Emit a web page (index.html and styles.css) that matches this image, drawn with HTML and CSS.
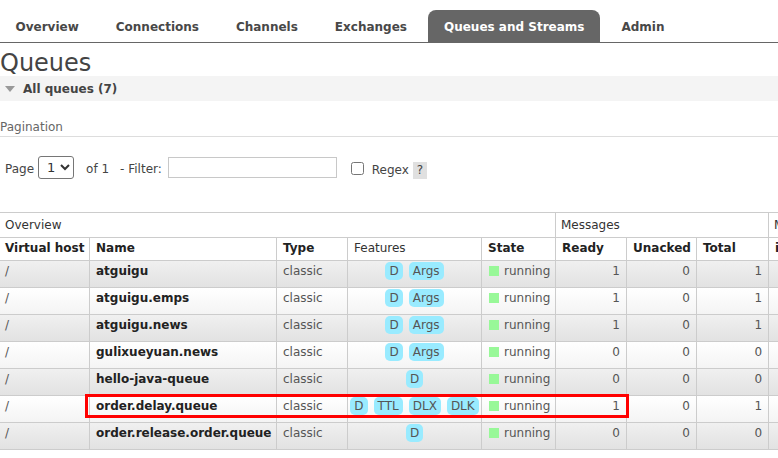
FILE: index.html
```html
<!DOCTYPE html>
<html>
<head>
<meta charset="utf-8">
<title>Queues</title>
<link rel="stylesheet" href="styles.css">
</head>
<body>
<ul class="tabs">
  <li class="tab">Overview</li>
  <li class="tab">Connections</li>
  <li class="tab">Channels</li>
  <li class="tab">Exchanges</li>
  <li class="tab active">Queues and Streams</li>
  <li class="tab">Admin</li>
</ul>
<h1 class="title">Queues</h1>
<div class="section-head"><span class="tri"></span>All queues (7)</div>
<h3 class="sub">Pagination</h3>
<div class="pager">
  <span class="lbl">Page</span>
  <select class="sel"><option>1</option></select>
  <span class="lbl of">of 1</span>
  <span class="lbl filt">- Filter:</span>
  <input class="filter" type="text">
  <input class="chk" type="checkbox">
  <span class="lbl regex">Regex</span>
  <span class="help">?</span>
</div>
<div class="table-wrap">
<table class="list">
  <colgroup>
    <col class="c-vh"><col class="c-name"><col class="c-type"><col class="c-feat"><col class="c-state"><col class="c-ready"><col class="c-unack"><col class="c-total"><col class="c-rate">
  </colgroup>
  <thead>
    <tr class="group">
      <th colspan="5" class="first">Overview</th>
      <th colspan="3">Messages</th>
      <th>Message rates</th>
    </tr>
    <tr class="head">
      <th class="first">Virtual host</th>
      <th>Name</th>
      <th>Type</th>
      <th class="normal">Features</th>
      <th>State</th>
      <th>Ready</th>
      <th>Unacked</th>
      <th>Total</th>
      <th>incoming</th>
    </tr>
  </thead>
  <tbody>
    <tr class="alt1">
      <td class="first">/</td><td class="name">atguigu</td><td>classic</td>
      <td><div class="feats"><span class="pill">D</span><span class="pill">Args</span></div></td>
      <td><span class="dot"></span>running</td><td class="num">1</td><td class="num">0</td><td class="num">1</td><td></td>
    </tr>
    <tr class="alt2">
      <td class="first">/</td><td class="name">atguigu.emps</td><td>classic</td>
      <td><div class="feats"><span class="pill">D</span><span class="pill">Args</span></div></td>
      <td><span class="dot"></span>running</td><td class="num">1</td><td class="num">0</td><td class="num">1</td><td></td>
    </tr>
    <tr class="alt1">
      <td class="first">/</td><td class="name">atguigu.news</td><td>classic</td>
      <td><div class="feats"><span class="pill">D</span><span class="pill">Args</span></div></td>
      <td><span class="dot"></span>running</td><td class="num">1</td><td class="num">0</td><td class="num">1</td><td></td>
    </tr>
    <tr class="alt2">
      <td class="first">/</td><td class="name">gulixueyuan.news</td><td>classic</td>
      <td><div class="feats"><span class="pill">D</span><span class="pill">Args</span></div></td>
      <td><span class="dot"></span>running</td><td class="num">0</td><td class="num">0</td><td class="num">0</td><td></td>
    </tr>
    <tr class="alt1">
      <td class="first">/</td><td class="name">hello-java-queue</td><td>classic</td>
      <td><div class="feats"><span class="pill">D</span></div></td>
      <td><span class="dot"></span>running</td><td class="num">0</td><td class="num">0</td><td class="num">0</td><td></td>
    </tr>
    <tr class="alt2">
      <td class="first">/</td><td class="name">order.delay.queue</td><td>classic</td>
      <td><div class="feats"><span class="pill">D</span><span class="pill">TTL</span><span class="pill">DLX</span><span class="pill">DLK</span></div></td>
      <td><span class="dot"></span>running</td><td class="num">1</td><td class="num">0</td><td class="num">1</td><td></td>
    </tr>
    <tr class="alt1">
      <td class="first">/</td><td class="name">order.release.order.queue</td><td>classic</td>
      <td><div class="feats"><span class="pill">D</span></div></td>
      <td><span class="dot"></span>running</td><td class="num">0</td><td class="num">0</td><td class="num">0</td><td></td>
    </tr>
  </tbody>
</table>
<div class="highlight"></div>
</div>
</body>
</html>
```
FILE: styles.css
```css
html, body {
  margin: 0;
  padding: 0;
  overflow: hidden;
  background: #fff;
}
body {
  font-family: "DejaVu Sans", Verdana, sans-serif;
  font-size: 12px;
  color: #444;
}
.tabs {
  display: flex;
  list-style: none;
  margin: 0;
  padding: 10px 0 0;
  border-bottom: 1px solid #666;
}
.tab {
  height: 32px;
  line-height: 34px;
  padding: 0 15.5px;
  margin-right: 6px;
  font-weight: bold;
  color: #484848;
  border-radius: 8px 8px 0 0;
  white-space: nowrap;
}
.tab.active {
  background: #666;
  color: #fff;
}
.title {
  margin: 7px 0 0;
  font-size: 24px;
  line-height: 26px;
  font-weight: normal;
  color: #444;
}
.section-head {
  display: flex;
  align-items: center;
  height: 25px;
  background: #f4f4f4;
  padding-left: 5px;
  font-weight: bold;
  color: #444;
}
.tri {
  width: 0;
  height: 0;
  border-left: 5.5px solid transparent;
  border-right: 5.5px solid transparent;
  border-top: 6px solid #999;
  margin-right: 8px;
}
.sub {
  margin: 18px 0 0;
  padding-bottom: 1px;
  font-size: 12px;
  line-height: 16px;
  font-weight: normal;
  color: #666;
  border-bottom: 1px solid #ddd;
}
.pager {
  display: flex;
  align-items: center;
  height: 24px;
  margin-top: 18px;
  padding-left: 5px;
}
.lbl {
  line-height: 14px;
  padding-top: 3px;
  color: #444;
}
.sel {
  width: 36px;
  height: 23px;
  margin: 0 0 0 4px;
  font-family: "DejaVu Sans", Verdana, sans-serif;
  font-size: 13px;
  color: #333;
  border: 1px solid #767676;
  border-radius: 3px;
  background: #fff;
  padding: 0 0 0 4px;
}
.of { margin-left: 12px; }
.filt { margin-left: 11px; }
.filter {
  box-sizing: border-box;
  width: 169px;
  height: 21px;
  margin: 0 0 0 6px;
  border: 1px solid #c8c8c8;
  padding: 0 3px;
}
.chk {
  width: 13px;
  height: 13px;
  margin: 2px 0 0 14px;
}
.regex {
  margin-left: 8px;
  padding-top: 5px;
}
.help {
  margin-left: 4px;
  margin-top: 6px;
  background: #e0e0e0;
  color: #444;
  height: 17px;
  line-height: 17px;
  padding: 0 4px;
}
.table-wrap {
  position: relative;
  margin-top: 33px;
}
.list {
  border-collapse: separate;
  border-spacing: 0;
  table-layout: fixed;
  width: 868px;
  border-top: 1px solid #ccc;
}
.c-vh { width: 89px; }
.c-name { width: 187px; }
.c-type { width: 71px; }
.c-feat { width: 134px; }
.c-state { width: 74px; }
.c-ready { width: 71px; }
.c-unack { width: 70px; }
.c-total { width: 72px; }
.c-rate { width: 100px; }
.list th, .list td {
  border-left: 1px solid #ccc;
  border-bottom: 1px solid #ccc;
  text-align: left;
  white-space: nowrap;
  overflow: hidden;
  vertical-align: top;
}
.list .first { border-left: none; }
.group th {
  font-weight: normal;
  color: #333;
  line-height: 16px;
  padding: 4px 6px 4px 5px;
}
.head th {
  font-weight: bold;
  color: #222;
  line-height: 16px;
  padding: 2px 6px 4px 6px;
}
.head th.first, .list td.first { padding-left: 5px; }
.head th.normal { font-weight: normal; color: #333; }
.list td {
  line-height: 18px;
  padding: 1px 6px 7px 6px;
  color: #555;
}
.list td.name { font-weight: bold; color: #222; }
.list td.num { text-align: right; padding-right: 6px; }
.alt1 td { background: linear-gradient(#f0f0f0, #e2e2e2); }
.alt2 td { background: linear-gradient(#ffffff, #f4f4f4); }
.feats {
  display: flex;
  justify-content: center;
  gap: 6px;
  height: 18px;
}
.pill {
  display: block;
  background: #99ebff;
  color: #555;
  border-radius: 5px;
  padding: 0 4px;
  line-height: 18px;
}
.dot {
  display: inline-block;
  width: 10px;
  height: 10px;
  background: #98f898;
  margin: 0 5px 0 1px;
  vertical-align: -1px;
}
.highlight {
  position: absolute;
  left: 85px;
  top: 182px;
  width: 544px;
  height: 24px;
  box-sizing: border-box;
  border: 3px solid #f00;
}
```
